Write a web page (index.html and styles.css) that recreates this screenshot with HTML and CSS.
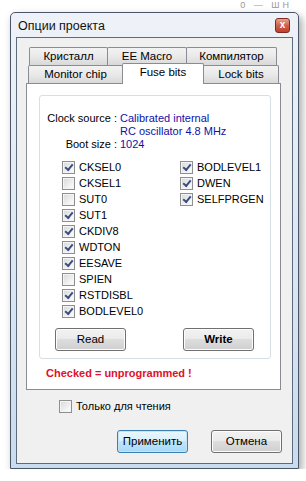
FILE: index.html
```html
<!DOCTYPE html>
<html>
<head>
	<meta charset="utf-8">
	<title>Опции проекта</title>
	<link rel="stylesheet" href="styles.css">
</head>
<body>

<div class="backdrop">0 &mdash; ШН</div>

<div class="window">
	<div class="titlebar">
		<span class="title">Опции проекта</span>
		<span class="close">x</span>
	</div>

	<div class="client">
		<div class="tabs">
			<div class="tab-row back">
				<div class="tab w-crystal">Кристалл</div>
				<div class="tab w-ee">EE Macro</div>
				<div class="tab w-comp">Компилятор</div>
			</div>
			<div class="tab-row front">
				<div class="tab w-mon">Monitor chip</div>
				<div class="tab selected w-fuse">Fuse bits</div>
				<div class="tab w-lock">Lock bits</div>
			</div>
		</div>

		<div class="panel">
			<div class="group">
				<div class="info">
					<span class="info-label">Clock source :</span>
					<span class="info-value">Calibrated internal<br>RC oscillator 4.8 MHz</span>
					<span class="info-label">Boot size :</span>
					<span class="info-value">1024</span>
				</div>

				<div class="fuses">
					<div class="fuse-col left">
						<label class="check"><span class="cb on"></span>CKSEL0</label>
						<label class="check"><span class="cb"></span>CKSEL1</label>
						<label class="check"><span class="cb"></span>SUT0</label>
						<label class="check"><span class="cb on"></span>SUT1</label>
						<label class="check"><span class="cb on"></span>CKDIV8</label>
						<label class="check"><span class="cb on"></span>WDTON</label>
						<label class="check"><span class="cb on"></span>EESAVE</label>
						<label class="check"><span class="cb"></span>SPIEN</label>
						<label class="check"><span class="cb on"></span>RSTDISBL</label>
						<label class="check"><span class="cb on"></span>BODLEVEL0</label>
					</div>
					<div class="fuse-col">
						<label class="check"><span class="cb on"></span>BODLEVEL1</label>
						<label class="check"><span class="cb on"></span>DWEN</label>
						<label class="check"><span class="cb on"></span>SELFPRGEN</label>
					</div>
				</div>

				<div class="group-buttons">
					<div class="btn">Read</div>
					<div class="btn bold">Write</div>
				</div>
			</div>

			<div class="warning">Checked = unprogrammed !</div>
		</div>

		<label class="check readonly"><span class="cb"></span>Только для чтения</label>

		<div class="dialog-buttons">
			<div class="btn default">Применить</div>
			<div class="btn">Отмена</div>
		</div>
	</div>
</div>

</body>
</html>
```

FILE: styles.css
```css
* {
	box-sizing: border-box;
}

body {
	margin: 0;
	background: #fff;
	font-family: "Liberation Sans", Arial, sans-serif;
	font-size: 11px;
	color: #000;
}

/* bit of the desktop behind the dialog */
.backdrop {
	height: 12px;
	padding-right: 14px;
	text-align: right;
	font-size: 9px;
	line-height: 11px;
	color: #999;
	letter-spacing: 3px;
}

/* Window frame */
.window {
	width: 289px;
	margin-left: 10px;
	border: 1px solid #4a5568;
	border-radius: 5px 5px 0 0;
	padding: 0 5px 4px 5px;
	background: linear-gradient(to bottom, #eef2f8, #d9e5f3 60%, #c9dbef);
	box-shadow: 3px 4px 8px rgba(0, 0, 0, 0.35);
}

.titlebar {
	height: 24px;
	display: flex;
	align-items: center;
	justify-content: space-between;
	padding: 0 2px 0 2px;
}

.title {
	font-size: 12.5px;
	color: #111;
	margin-top: 1px;
}

.close {
	width: 15px;
	height: 15px;
	border: 1px solid #7d2b22;
	border-radius: 3px;
	background: linear-gradient(to bottom, #e9a192, #d0604c 50%, #c0402c);
	color: #fff;
	font-weight: bold;
	font-size: 10px;
	line-height: 12px;
	text-align: center;
	margin-right: 1px;
}

.client {
	height: 427px;
	border: 1px solid #5d6b7d;
	background: #f0f0f0;
	padding: 9px 10px 0 9px;
}

/* Tabs */
.tab-row {
	display: flex;
	height: 18px;
}

.tab-row.back {
	padding-left: 3px;
}

.tab-row.front {
	padding-left: 2px;
	align-items: flex-end;
}

.tab {
	height: 18px;
	border: 1px solid #898c95;
	border-bottom: none;
	border-radius: 2px 2px 0 0;
	background: linear-gradient(to bottom, #f3f3f3, #e9e9e9 50%, #d9d9d9);
	text-align: center;
	line-height: 17px;
	font-size: 11.5px;
	margin-right: -1px;
}

.tab.selected {
	position: relative;
	z-index: 1;
	height: 21px;
	margin-bottom: -1px;
	background: #fff;
	line-height: 16px;
}

.w-crystal { width: 79px; }
.w-ee { width: 80px; }
.w-comp { width: 91px; }
.w-mon { width: 95px; }
.w-fuse { width: 82px; }
.w-lock { width: 76px; }

.panel {
	width: 255px;
	height: 307px;
	border: 1px solid #898c95;
	background: #fff;
	padding-top: 11px;
}

.group {
	width: 232px;
	margin-left: 12px;
	border: 1px solid #d5dfe5;
	border-radius: 3px;
	padding: 16px 0 7px 0;
}

.info {
	display: grid;
	grid-template-columns: 77px auto;
	column-gap: 3px;
	line-height: 13px;
}

.info-label {
	text-align: right;
}

.info-value {
	color: #1010a8;
}

.fuses {
	display: flex;
	padding-left: 22px;
	margin-top: 8px;
}

.fuse-col.left {
	width: 118px;
}

/* Checkbox, Win7 look */
.check {
	display: flex;
	align-items: center;
	height: 16px;
	gap: 4px;
}

.cb {
	position: relative;
	width: 13px;
	height: 13px;
	border: 1px solid #8e8f8f;
	background: linear-gradient(135deg, #d8d8d8, #f4f4f4 70%, #fff);
	box-shadow: inset 0 0 0 1px #f4f4f4;
	flex: none;
}

.cb.on::after {
	content: "";
	position: absolute;
	left: 2px;
	top: 2px;
	width: 6px;
	height: 3px;
	border-left: 2px solid #3a4d86;
	border-bottom: 2px solid #3a4d86;
	transform: rotate(-50deg);
}

/* Buttons */
.btn {
	width: 71px;
	height: 23px;
	border: 1px solid #707070;
	border-radius: 3px;
	background: linear-gradient(to bottom, #f2f2f2, #ebebeb 45%, #dddddd 50%, #cfcfcf);
	box-shadow: inset 0 0 0 1px #fcfcfc;
	text-align: center;
	line-height: 21px;
	font-size: 11.5px;
}

.btn.bold {
	font-weight: bold;
}

.btn.default {
	border-color: #3c7fb1;
	background: linear-gradient(to bottom, #eaf6fd, #d9f0fc 45%, #bee6fd 50%, #a7d9f5);
	box-shadow: inset 0 0 0 1px #c4e5f6;
}

.group-buttons {
	display: flex;
	justify-content: space-between;
	padding: 0 16px 0 15px;
	margin-top: 9px;
}

.warning {
	margin: 8px 0 0 19px;
	line-height: 13px;
	font-weight: bold;
	color: #e0102a;
}

.readonly {
	margin: 8px 0 0 33px;
}

.dialog-buttons {
	display: flex;
	justify-content: flex-end;
	gap: 23px;
	margin-top: 16px;
}
```
